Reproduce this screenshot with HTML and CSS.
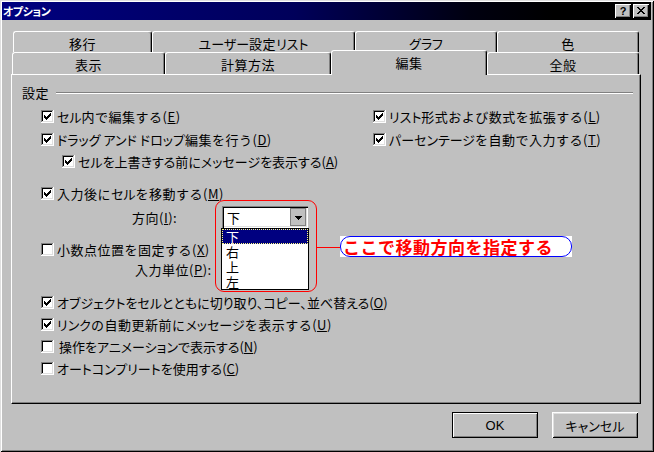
FILE: index.html
```html
<!DOCTYPE html>
<html lang="ja">
<head>
<meta charset="utf-8">
<title>オプション</title>
<link rel="stylesheet" href="styles.css">
</head>
<body>
<div class="window">
  <div class="titlebar">
    <span class="title">オプション</span>
    <div class="cap-btns">
      <span class="cap-btn help">?</span>
      <span class="cap-btn close"><svg width="8" height="7" viewBox="0 0 8 7" shape-rendering="crispEdges"><path d="M0 0h2v1H0zM6 0h2v1H6zM1 1h2v1H1zM5 1h2v1H5zM2 2h4v1H2zM3 3h2v1H3zM2 4h4v1H2zM1 5h2v1H1zM5 5h2v1H5zM0 6h2v1H0zM6 6h2v1H6z"/></svg></span>
    </div>
  </div>
  <div class="client">
    <div class="tabrow row1">
      <div class="tab w139">移行</div>
      <div class="tab w203"><span class="k">ユーザー</span>設定<span class="k">リスト</span></div>
      <div class="tab w142"><span class="k">グラフ</span></div>
      <div class="tab w142">色</div>
    </div>
    <div class="tabrow row2">
      <div class="tab w153">表示</div>
      <div class="tab w166">計算方法</div>
      <div class="tab w156 selected">編集</div>
      <div class="tab w152">全般</div>
    </div>
    <div class="panel">
      <div class="group-title"><span>設定</span><span class="etch"></span></div>
      <div class="rows">
        <div class="two-col r1">
          <div class="item"><svg class="cb" width="13" height="13" viewBox="0 0 13 13" shape-rendering="crispEdges"><path fill="#808080" d="M0 0h12v1H1v11H0z"/><path fill="#000" d="M1 1h10v1H2v9H1z"/><path fill="#fff" d="M12 0h1v13H0v-1h12z"/><path fill="#dfdfdf" d="M11 1h1v11H1v-1h10z"/><rect x="2" y="2" width="9" height="9" fill="#fff"/><path d="M9 3h1v1h-1zM8 4h2v1h-2zM3 5h1v1h-1zM7 5h3v1h-3zM3 6h2v1h-2zM6 6h3v1h-3zM3 7h5v1h-5zM4 8h3v1h-3zM5 9h1v1h-1z"/></svg><span><span class="k">セル</span>内で編集する(<u>E</u>)</span></div>
          <div class="item"><svg class="cb" width="13" height="13" viewBox="0 0 13 13" shape-rendering="crispEdges"><path fill="#808080" d="M0 0h12v1H1v11H0z"/><path fill="#000" d="M1 1h10v1H2v9H1z"/><path fill="#fff" d="M12 0h1v13H0v-1h12z"/><path fill="#dfdfdf" d="M11 1h1v11H1v-1h10z"/><rect x="2" y="2" width="9" height="9" fill="#fff"/><path d="M9 3h1v1h-1zM8 4h2v1h-2zM3 5h1v1h-1zM7 5h3v1h-3zM3 6h2v1h-2zM6 6h3v1h-3zM3 7h5v1h-5zM4 8h3v1h-3zM5 9h1v1h-1z"/></svg><span><span class="k">リスト</span>形式および数式を拡張する(<u>L</u>)</span></div>
        </div>
        <div class="two-col r2">
          <div class="item"><svg class="cb" width="13" height="13" viewBox="0 0 13 13" shape-rendering="crispEdges"><path fill="#808080" d="M0 0h12v1H1v11H0z"/><path fill="#000" d="M1 1h10v1H2v9H1z"/><path fill="#fff" d="M12 0h1v13H0v-1h12z"/><path fill="#dfdfdf" d="M11 1h1v11H1v-1h10z"/><rect x="2" y="2" width="9" height="9" fill="#fff"/><path d="M9 3h1v1h-1zM8 4h2v1h-2zM3 5h1v1h-1zM7 5h3v1h-3zM3 6h2v1h-2zM6 6h3v1h-3zM3 7h5v1h-5zM4 8h3v1h-3zM5 9h1v1h-1z"/></svg><span><span class="k">ドラッグ アンド ドロップ</span>編集を行う(<u>D</u>)</span></div>
          <div class="item"><svg class="cb" width="13" height="13" viewBox="0 0 13 13" shape-rendering="crispEdges"><path fill="#808080" d="M0 0h12v1H1v11H0z"/><path fill="#000" d="M1 1h10v1H2v9H1z"/><path fill="#fff" d="M12 0h1v13H0v-1h12z"/><path fill="#dfdfdf" d="M11 1h1v11H1v-1h10z"/><rect x="2" y="2" width="9" height="9" fill="#fff"/><path d="M9 3h1v1h-1zM8 4h2v1h-2zM3 5h1v1h-1zM7 5h3v1h-3zM3 6h2v1h-2zM6 6h3v1h-3zM3 7h5v1h-5zM4 8h3v1h-3zM5 9h1v1h-1z"/></svg><span><span class="k">パーセンテージ</span>を自動で入力する(<u>T</u>)</span></div>
        </div>
        <div class="row r3 indent">
          <div class="item"><svg class="cb" width="13" height="13" viewBox="0 0 13 13" shape-rendering="crispEdges"><path fill="#808080" d="M0 0h12v1H1v11H0z"/><path fill="#000" d="M1 1h10v1H2v9H1z"/><path fill="#fff" d="M12 0h1v13H0v-1h12z"/><path fill="#dfdfdf" d="M11 1h1v11H1v-1h10z"/><rect x="2" y="2" width="9" height="9" fill="#fff"/><path d="M9 3h1v1h-1zM8 4h2v1h-2zM3 5h1v1h-1zM7 5h3v1h-3zM3 6h2v1h-2zM6 6h3v1h-3zM3 7h5v1h-5zM4 8h3v1h-3zM5 9h1v1h-1z"/></svg><span class="k">セルを上書きする前にメッセージを表示する(<u>A</u>)</span></div>
        </div>
        <div class="row r4">
          <div class="item"><svg class="cb" width="13" height="13" viewBox="0 0 13 13" shape-rendering="crispEdges"><path fill="#808080" d="M0 0h12v1H1v11H0z"/><path fill="#000" d="M1 1h10v1H2v9H1z"/><path fill="#fff" d="M12 0h1v13H0v-1h12z"/><path fill="#dfdfdf" d="M11 1h1v11H1v-1h10z"/><rect x="2" y="2" width="9" height="9" fill="#fff"/><path d="M9 3h1v1h-1zM8 4h2v1h-2zM3 5h1v1h-1zM7 5h3v1h-3zM3 6h2v1h-2zM6 6h3v1h-3zM3 7h5v1h-5zM4 8h3v1h-3zM5 9h1v1h-1z"/></svg><span>入力後に<span class="k">セル</span>を移動する(<u>M</u>)</span></div>
        </div>
        <div class="row r5">
          <span class="field-label dir">方向(<u>I</u>):</span>
          <div class="combo">
            <span class="combo-text">下</span>
            <span class="combo-btn"><svg width="7" height="4" viewBox="0 0 7 4" shape-rendering="crispEdges"><path d="M0 0h7v1H0zM1 1h5v1H1zM2 2h3v1H2zM3 3h1v1H3z"/></svg></span>
            <div class="droplist">
              <div class="opt sel"><span class="focus">下</span></div>
              <div class="opt">右</div>
              <div class="opt">上</div>
              <div class="opt">左</div>
            </div>
          </div>
        </div>
        <div class="row r6">
          <div class="item"><svg class="cb" width="13" height="13" viewBox="0 0 13 13" shape-rendering="crispEdges"><path fill="#808080" d="M0 0h12v1H1v11H0z"/><path fill="#000" d="M1 1h10v1H2v9H1z"/><path fill="#fff" d="M12 0h1v13H0v-1h12z"/><path fill="#dfdfdf" d="M11 1h1v11H1v-1h10z"/><rect x="2" y="2" width="9" height="9" fill="#fff"/></svg><span>小数点位置を固定する(<u>X</u>)</span></div>
        </div>
        <div class="row r7">
          <span class="field-label unit">入力単位(<u>P</u>):</span>
        </div>
        <div class="row r8">
          <div class="item"><svg class="cb" width="13" height="13" viewBox="0 0 13 13" shape-rendering="crispEdges"><path fill="#808080" d="M0 0h12v1H1v11H0z"/><path fill="#000" d="M1 1h10v1H2v9H1z"/><path fill="#fff" d="M12 0h1v13H0v-1h12z"/><path fill="#dfdfdf" d="M11 1h1v11H1v-1h10z"/><rect x="2" y="2" width="9" height="9" fill="#fff"/><path d="M9 3h1v1h-1zM8 4h2v1h-2zM3 5h1v1h-1zM7 5h3v1h-3zM3 6h2v1h-2zM6 6h3v1h-3zM3 7h5v1h-5zM4 8h3v1h-3zM5 9h1v1h-1z"/></svg><span class="k">オブジェクトをセルとともに切り取り、コピー、並べ替える(<u>O</u>)</span></div>
        </div>
        <div class="row r9">
          <div class="item"><svg class="cb" width="13" height="13" viewBox="0 0 13 13" shape-rendering="crispEdges"><path fill="#808080" d="M0 0h12v1H1v11H0z"/><path fill="#000" d="M1 1h10v1H2v9H1z"/><path fill="#fff" d="M12 0h1v13H0v-1h12z"/><path fill="#dfdfdf" d="M11 1h1v11H1v-1h10z"/><rect x="2" y="2" width="9" height="9" fill="#fff"/><path d="M9 3h1v1h-1zM8 4h2v1h-2zM3 5h1v1h-1zM7 5h3v1h-3zM3 6h2v1h-2zM6 6h3v1h-3zM3 7h5v1h-5zM4 8h3v1h-3zM5 9h1v1h-1z"/></svg><span><span class="k">リンク</span>の自動更新前に<span class="k">メッセージ</span>を表示する(<u>U</u>)</span></div>
        </div>
        <div class="row r10">
          <div class="item"><svg class="cb" width="13" height="13" viewBox="0 0 13 13" shape-rendering="crispEdges"><path fill="#808080" d="M0 0h12v1H1v11H0z"/><path fill="#000" d="M1 1h10v1H2v9H1z"/><path fill="#fff" d="M12 0h1v13H0v-1h12z"/><path fill="#dfdfdf" d="M11 1h1v11H1v-1h10z"/><rect x="2" y="2" width="9" height="9" fill="#fff"/></svg><span class="k lead">操作をアニメーションで表示する(<u>N</u>)</span></div>
        </div>
        <div class="row r11">
          <div class="item"><svg class="cb" width="13" height="13" viewBox="0 0 13 13" shape-rendering="crispEdges"><path fill="#808080" d="M0 0h12v1H1v11H0z"/><path fill="#000" d="M1 1h10v1H2v9H1z"/><path fill="#fff" d="M12 0h1v13H0v-1h12z"/><path fill="#dfdfdf" d="M11 1h1v11H1v-1h10z"/><rect x="2" y="2" width="9" height="9" fill="#fff"/></svg><span class="k">オートコンプリートを使用する(<u>C</u>)</span></div>
        </div>
      </div>
      <div class="annot-box"></div>
      <div class="annot-line"></div>
      <div class="callout"><div class="callout-inner">ここで移動方向を指定する</div></div>
    </div>
    <div class="buttons">
      <div class="btn default">OK</div>
      <div class="btn"><span class="k">キャンセル</span></div>
    </div>
  </div>
</div>
</body>
</html>
```
FILE: styles.css
```css
* { box-sizing: border-box; }
html, body { margin: 0; padding: 0; }
body {
  width: 654px;
  height: 452px;
  overflow: hidden;
  background: #c0c0c0;
  font-family: "Noto Sans CJK JP", "Noto Sans", sans-serif;
  font-size: 13px;
  color: #000;
}
u { text-decoration: underline; text-underline-offset: 1px; }
.k { font-feature-settings: "palt"; letter-spacing: 0; }

.window {
  width: 654px;
  height: 452px;
  background: #c0c0c0;
  box-shadow: inset 1px 1px #dfdfdf, inset -1px -1px #000, inset 2px 2px #fff, inset -2px -2px #808080;
  padding: 2px 3px 2px 2px;
  display: flex;
  flex-direction: column;
}

.titlebar {
  height: 18px;
  background: linear-gradient(90deg, #000080 0%, #00005a 45%, #000010 72%, #000 85%, #000 100%);
  display: flex;
  align-items: center;
  justify-content: space-between;
  padding: 0 2px 0 1px;
}
.title {
  color: #fff;
  font-weight: bold;
  font-size: 11px;
  letter-spacing: -0.5px;
  line-height: 18px;
  font-feature-settings: "palt";
}
.cap-btns { display: flex; gap: 2px; }
.cap-btn {
  width: 16px;
  height: 14px;
  background: #c0c0c0;
  box-shadow: inset 1px 1px #fff, inset -1px -1px #000, inset -2px -2px #808080;
  display: flex;
  align-items: center;
  justify-content: center;
  font-family: "Liberation Sans", sans-serif;
  font-weight: bold;
  font-size: 11px;
  line-height: 1;
}
.cap-btn.close { padding-bottom: 1px; }

.client { display: flex; flex-direction: column; flex: 1; }

.tabrow { display: flex; }
.row1 { height: 21px; margin-top: 11px; margin-left: 11px; }
.row2 { height: 22px; margin-left: 10px; align-items: flex-start; }
.tab {
  height: 100%;
  display: flex;
  align-items: center;
  justify-content: center;
  padding-top: 2px;
  background: #c0c0c0;
  border-left: 1px solid #fff;
  border-top: 1px solid #fff;
  border-right: 1px solid #000;
  box-shadow: inset -1px 0 #808080;
  border-radius: 3px 3px 0 0;
  letter-spacing: 0.5px;
}
.row2 .tab { height: 22px; }
.tab.selected {
  height: 25px;
  margin-top: -2px;
  padding-top: 0;
  padding-bottom: 2px;
  position: relative;
  z-index: 2;
}
.w139 { width: 139px; }
.w203 { width: 203px; }
.w142 { width: 142px; }
.w153 { width: 153px; }
.w166 { width: 166px; }
.w156 { width: 156px; }
.w152 { width: 152px; }

.panel {
  position: relative;
  margin-left: 9px;
  width: 630px;
  height: 330px;
  border-left: 1px solid #fff;
  border-top: 1px solid #fff;
  border-right: 1px solid #000;
  border-bottom: 1px solid #000;
  box-shadow: inset -1px -1px #808080;
  padding-top: 11px;
  letter-spacing: 0.5px;
}
.group-title {
  display: flex;
  align-items: center;
  height: 14px;
  margin-left: 10px;
  margin-right: 7px;
  gap: 7px;
}
.group-title span:first-child { line-height: 14px; }
.etch {
  flex: 1;
  height: 2px;
  border-top: 1px solid #808080;
  border-bottom: 1px solid #fff;
}

.rows { display: flex; flex-direction: column; padding-left: 29px; margin-top: 5px; }
.row, .two-col { height: 22px; display: flex; align-items: center; }
.two-col { display: grid; grid-template-columns: 332px 1fr; align-items: center; }
.item { display: flex; align-items: center; gap: 3px; white-space: nowrap; }
.cb { flex: none; display: block; }
.lead { margin-left: 2px; }
.indent { padding-left: 21px; }
.r2 { margin-top: 1px; }
.r4 { margin-top: 10px; }
.r5 { margin-top: 2px; }
.r6 { margin-top: 11px; height: 20px; }
.r7 { height: 20px; }
.r8 { margin-top: 12px; }

.field-label { white-space: nowrap; }
.dir { margin-left: 91px; width: 90px; }
.unit { margin-left: 94px; }

.combo {
  position: relative;
  width: 86px;
  height: 22px;
  background: #fff;
  box-shadow: inset 1px 1px #808080, inset 2px 2px #000, inset -1px -1px #fff, inset -2px -2px #dfdfdf;
  display: flex;
  align-items: center;
  padding: 2px 2px 2px 5px;
  z-index: 3;
}
.combo-text { flex: 1; }
.combo-btn {
  width: 16px;
  height: 18px;
  background: #c0c0c0;
  border: 1px solid #808080;
  display: flex;
  align-items: center;
  justify-content: center;
  padding-top: 1px;
}
.combo-btn svg { display: block; }
.droplist {
  position: absolute;
  left: -1px;
  top: 22px;
  width: 88px;
  height: 62px;
  background: #fff;
  border: 1px solid #000;
  display: flex;
  flex-direction: column;
}
.opt {
  height: 15px;
  line-height: 15px;
  padding-left: 4px;
}
.opt.sel {
  background: #000080;
  color: #fff;
  padding: 0;
  height: 16px;
}
.focus {
  display: block;
  height: 100%;
  border: 1px dotted #ffff80;
  padding-left: 3px;
  line-height: 13px;
}

.annot-box {
  position: absolute;
  left: 203px;
  top: 125px;
  width: 102px;
  height: 92px;
  border: 1px solid #f00;
  border-radius: 9px;
  z-index: 1;
}
.annot-line {
  position: absolute;
  left: 305px;
  top: 172px;
  width: 25px;
  height: 1px;
  background: #f00;
}
.callout {
  position: absolute;
  left: 328px;
  top: 161px;
  width: 232px;
  height: 21px;
  background: #fff;
}
.callout-inner {
  height: 100%;
  border: 1px solid #00f;
  border-radius: 10px;
  color: #f00;
  font-weight: bold;
  font-size: 17px;
  line-height: 19px;
  padding-left: 2px;
  letter-spacing: 0.5px;
  white-space: nowrap;
}

.buttons {
  display: flex;
  justify-content: flex-end;
  gap: 14px;
  margin-top: 8px;
  padding-right: 13px;
}
.btn {
  width: 86px;
  height: 26px;
  display: flex;
  align-items: center;
  justify-content: center;
  background: #c0c0c0;
  box-shadow: inset 1px 1px #fff, inset -1px -1px #000, inset 2px 2px #dfdfdf, inset -2px -2px #808080;
}
.btn.default {
  border: 1px solid #000;
  box-shadow: inset 1px 1px #fff, inset -1px -1px #808080;
  font-family: "Liberation Sans", sans-serif;
  font-size: 13px;
}
```
